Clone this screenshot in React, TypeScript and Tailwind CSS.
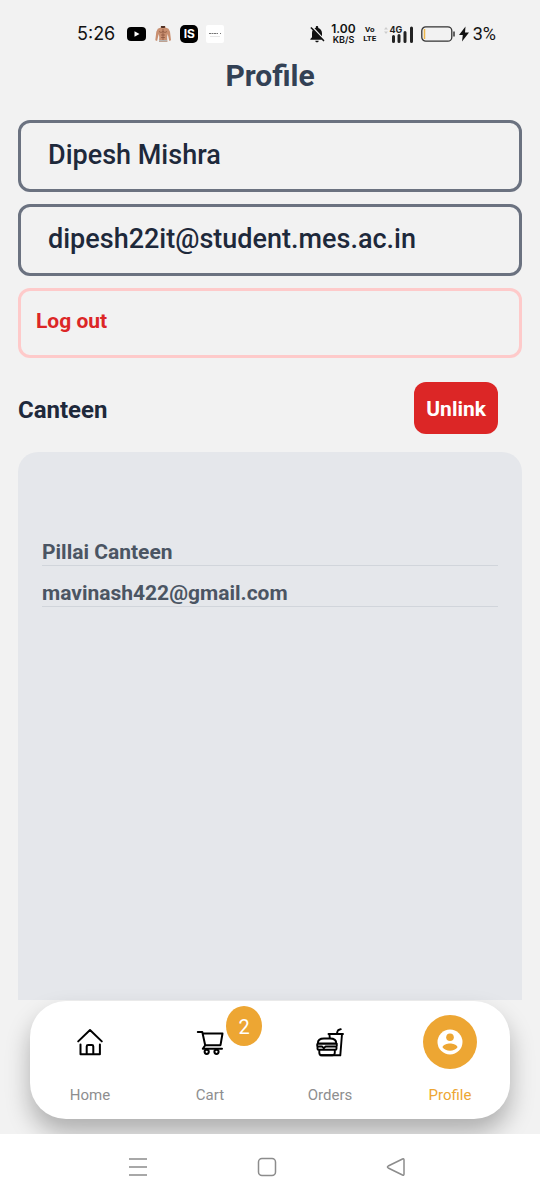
import type { ReactNode } from "react";
import { MdNotificationsOff } from "react-icons/md";

function StatusBar() {
  return (
    <header className="flex h-12 items-center justify-between pt-5 pr-11 pl-[77px] font-[Inter,sans-serif] text-[#111111]">
      <div className="flex items-center gap-2">
        <span className="mr-1 text-lg leading-7">5:26</span>
        <svg className="h-[14px] w-[19px]" viewBox="0 0 19 14" aria-hidden="true">
          <rect width="19" height="14" rx="4" fill="#000" />
          <path d="M7.500 4.200v5.600L12.500 7z" fill="#fff" />
        </svg>
        <svg className="h-[18px] w-[18px]" viewBox="0 0 18 18" aria-hidden="true">
          <path d="M7 1h4l.5 1.500 3 1.300 1.500 3 1 8.500-1.700.7-1.600-7-.6 3 .3 5H5l.3-5-.6-3-1.600 7L1.300 15.300l1-8.500 1.500-3 3-1.300z" fill="#c98f70" />
          <path d="M9 4v11M5 6.500q2 2 4 0 2 2 4 0M7 10h4M7 12.500h4" fill="none" stroke="#875039" strokeWidth=".7" />
          <path d="M6.800 1h4.400l-.5 2H7.300z" fill="#503024" />
          <path d="M5 15h8v1.500H5z" fill="#b5b5b5" />
        </svg>
        <span className="flex h-[18px] w-[18px] items-center justify-center rounded-[5px] bg-black text-xs font-bold text-white">IS</span>
        <svg className="h-[18px] w-[18px]" viewBox="0 0 18 18" aria-hidden="true">
          <rect width="18" height="18" rx="2" fill="#fff" />
          <path d="M3 8.500h9M14 8.500h1" stroke="#777" strokeWidth="1.200" strokeDasharray="2 .5" />
          <path d="M4 11.500h10" stroke="#ddd" strokeWidth=".7" />
        </svg>
      </div>
      <div className="flex items-center">
        <MdNotificationsOff className="mr-1 h-5 w-5" aria-hidden="true" />
        <div className="mr-2 flex flex-col items-center font-semibold">
          <span className="text-xs leading-[11px]">1.00</span>
          <span className="text-[9px] leading-[11px]">KB/S</span>
        </div>
        <div className="mr-2 flex w-3 flex-col items-center font-[Roboto,sans-serif] text-[8px] leading-[9px] font-bold">
          <span>Vo</span>
          <span>LTE</span>
        </div>
        <svg className="mr-2 h-[18px] w-[29px]" viewBox="0 0 29 18" aria-hidden="true">
          <path d="M0 4.500l2-2.500 2 2.500zM0 6.500l2 2.500 2-2.500z" fill="#ccc" />
          <text x="5.500" y="8" fontSize="9" fontWeight="700" fill="#222">4G</text>
          <path d="M9.500 11.500v5M15 10.500v6M21 7.500v9M27.500 3v13.500" stroke="#222" strokeWidth="3" strokeLinecap="round" />
        </svg>
        <svg className="mr-1 h-4 w-[34px]" viewBox="0 0 34 16" aria-hidden="true">
          <rect x=".8" y=".8" width="30" height="14.400" rx="4" fill="none" stroke="#333" strokeWidth="1.300" />
          <path d="M3.500 3v10" stroke="#edb64b" strokeWidth="1.500" />
          <path d="M33 5.500v5" stroke="#333" strokeWidth="1.500" />
        </svg>
        <svg className="mr-1 h-4 w-[10px]" viewBox="0 0 10 16" aria-hidden="true">
          <path d="M6.500.5L0 9h3.800L3 15.500 10 6.500H6z" fill="#111" />
        </svg>
        <span className="font-[Roboto,sans-serif] text-lg leading-7">3%</span>
      </div>
    </header>
  );
}

const strokeProps = {
  fill: "none",
  stroke: "#000",
  strokeWidth: 2,
  strokeLinecap: "round" as const,
  strokeLinejoin: "round" as const,
};

function HomeIcon() {
  return (
    <svg className="h-7 w-7 overflow-visible" viewBox="0 0 28 28" aria-hidden="true" {...strokeProps}>
      <path d="M2.200 13.400L14 2l11.800 11.400M4.500 16.500v9.800h19.400v-9.800M10.700 26v-7.600q0-1.400 1.400-1.400h3.800q1.400 0 1.400 1.400V26" />
    </svg>
  );
}

function CartIcon() {
  return (
    <svg className="h-7 w-7 overflow-visible" viewBox="0 0 28 28" aria-hidden="true" {...strokeProps}>
      <path d="M1.800 4H6.300L9.200 17.200H24.500L26.500 5.500H6.800M9.200 17.200L6.800 20.700H26" />
      <circle cx="10.700" cy="23.800" r="2.100" />
      <circle cx="20.500" cy="23.800" r="2.100" />
    </svg>
  );
}

function OrdersIcon() {
  return (
    <svg className="h-7 w-7 overflow-visible" viewBox="0 0 28 28" aria-hidden="true" {...strokeProps} strokeWidth={1.9}>
      <path d="M12.500 6H27M13.400 6l.4 4M26 6l-1.700 21.300H4.500M20.800 6l.8-2.900q.2-.8 1-1.100l2.200-.8" />
      <path d="M1.800 15.500C1.800 12 4.500 10.500 8 10.500h6c3.600 0 6.300 1.500 6.300 5zM1.500 15.700h19.300M1.300 18.500H6l1.800 1.600 1.800-1.600h11M1.500 15.700q-.8 1.400 0 2.800v2.300q0 1 1 1h17q1 0 1-1v-2.300q.8-1.400 0-2.800M3.300 22v2.500q0 2.800 2.500 2.800h10.500q2.500 0 2.500-2.800V22" />
    </svg>
  );
}

function ProfileIcon() {
  return (
    <span className="flex h-[54px] w-[54px] items-center justify-center rounded-full bg-[#eda633]">
      <svg className="h-[26px] w-[26px]" viewBox="0 0 26 26" aria-hidden="true">
        <circle cx="13" cy="13" r="12.500" fill="#fff" />
        <circle cx="13" cy="8.300" r="3.800" fill="#eda633" />
        <path d="M5.500 18.300c0-2.600 5-3.900 7.500-3.900s7.500 1.300 7.500 3.900c-1.500 2.300-4.400 3.500-7.500 3.500s-6-1.200-7.500-3.500z" fill="#eda633" />
      </svg>
    </span>
  );
}

function Tab({ label, active, badge, children }: { label: string; active?: boolean; badge?: number; children: ReactNode }) {
  return (
    <a href="#" aria-current={active ? "page" : undefined} className="flex flex-1 flex-col items-center pt-[14px]">
      <span className="relative flex h-[54px] w-[54px] items-center justify-center">
        {children}
        {badge !== undefined && (
          <span className="absolute -top-[9px] left-[43px] flex h-10 w-9 items-center justify-center rounded-[50%] bg-[#eda633] pt-0.5 text-xl text-white">
            {badge}
          </span>
        )}
      </span>
      <span className={active ? "mt-4 text-[15px] leading-5 text-[#eda633]" : "mt-4 text-[15px] leading-5 text-[#8e8e8f]"}>{label}</span>
    </a>
  );
}

export default function App() {
  return (
    <div className="flex min-h-screen flex-col bg-[#f2f2f2] font-[Roboto,sans-serif]">
      <StatusBar />
      <main className="flex flex-1 flex-col px-[18px]">
        <h1 className="mt-2 text-center text-[30px] leading-10 font-bold text-[#334155]">Profile</h1>
        <div className="mt-6 flex flex-col gap-3">
          <input
            aria-label="Name"
            readOnly
            value="Dipesh Mishra"
            className="h-[72px] w-full rounded-xl border-[3px] border-[#6b7280] px-[27px] pb-0.5 text-[27px] font-medium text-[#1e293b]"
          />
          <input
            aria-label="Email"
            readOnly
            value="dipesh22it@student.mes.ac.in"
            className="h-[72px] w-full rounded-xl border-[3px] border-[#6b7280] px-[27px] pb-0.5 text-[27px] font-medium text-[#1e293b]"
          />
          <button type="button" className="h-[70px] w-full rounded-xl border-[3px] border-[#fecaca] px-[15px] pb-0.5 text-left text-[21px] font-bold text-[#dc2626]">
            Log out
          </button>
        </div>
        <div className="mt-6 flex items-center justify-between pr-6">
          <h2 className="pt-1 text-2xl leading-8 font-bold text-[#1e293b]">Canteen</h2>
          <button type="button" className="h-[52px] rounded-xl bg-[#dc2626] px-3 pt-1 text-[21px] font-bold text-white">
            Unlink
          </button>
        </div>
        <section className="mt-[18px] flex-1 rounded-t-[20px] bg-[#e5e7eb] px-6 pt-[87px]">
          <p className="border-b border-[#d1d5db] text-[21px] leading-[26px] font-bold text-[#4b5563]">Pillai Canteen</p>
          <p className="mt-[14px] border-b border-[#d1d5db] text-[21px] leading-[26px] font-bold text-[#4b5563]">mavinash422@gmail.com</p>
        </section>
      </main>
      <div className="px-[30px] pt-px pb-[15px]">
        <nav aria-label="Main" className="flex h-[118px] rounded-[36px] bg-white shadow-[0_14px_24px_rgba(0,0,0,0.28)]">
          <Tab label="Home"><HomeIcon /></Tab>
          <Tab label="Cart" badge={2}><CartIcon /></Tab>
          <Tab label="Orders"><OrdersIcon /></Tab>
          <Tab label="Profile" active><ProfileIcon /></Tab>
        </nav>
      </div>
      <footer className="relative flex h-[66px] items-center justify-center gap-[109px] bg-white pr-1.5">
        <button type="button" aria-label="Recent apps">
          <svg className="h-5 w-5" viewBox="0 0 20 20" fill="none" stroke="#8c8c8c" strokeWidth="1.500">
            <path d="M1 2h18M1 10h18M1 18h18" />
          </svg>
        </button>
        <button type="button" aria-label="Home screen">
          <svg className="h-5 w-5" viewBox="0 0 20 20" fill="none" stroke="#8c8c8c" strokeWidth="1.500">
            <rect x="1.500" y="1.500" width="17" height="17" rx="3.500" />
          </svg>
        </button>
        <button type="button" aria-label="Back">
          <svg className="h-5 w-5" viewBox="0 0 20 20" fill="none" stroke="#8c8c8c" strokeWidth="1.500" strokeLinejoin="round">
            <path d="M2.200 9L16.500 2q1.500-.6 1.500 1v14q0 1.600-1.500 1L2.200 11q-1.500-1 0-2z" />
          </svg>
        </button>
      </footer>
    </div>
  );
}
